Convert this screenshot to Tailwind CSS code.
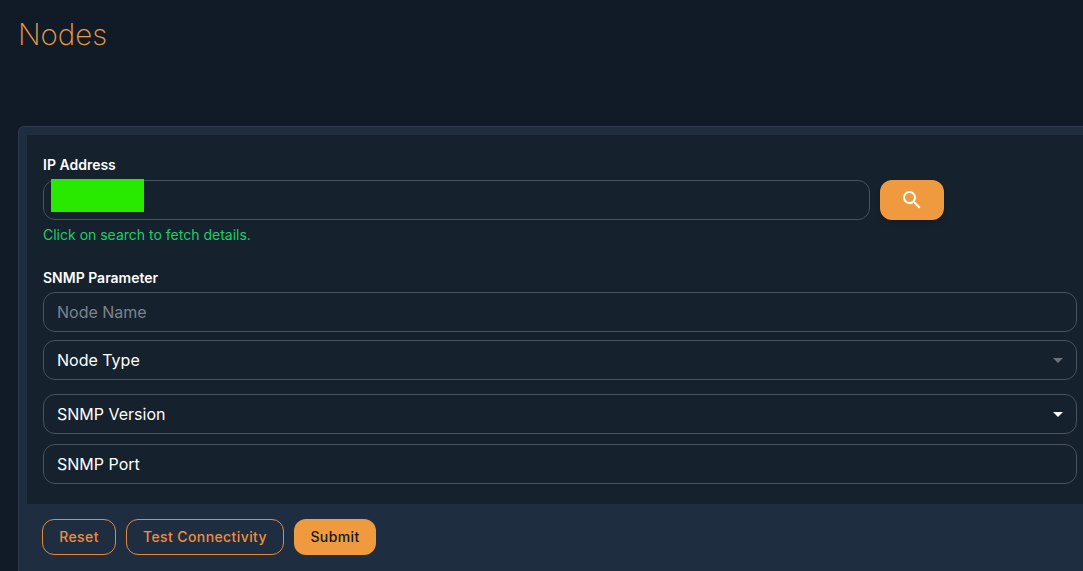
<!DOCTYPE html>
<html lang="en">
<head>
    <meta charset="UTF-8">
    <title>Nodes</title>
    <script src="https://cdn.jsdelivr.net/npm/@tailwindcss/browser@4"></script>
</head>
<body class="h-[571px] w-[1083px] overflow-hidden bg-[#111b27] font-['Inter',sans-serif] text-white">
    <div class="pl-[18px]">
        <!-- Page title -->
        <h1 class="h-[126px] pt-[15px] text-[29.5px] leading-[38px] font-extralight text-[#e89c48]">Nodes</h1>

        <!-- Card -->
        <div class="w-[1120px] rounded-tl-md border-t border-l border-[#2f3b4c] bg-[#1f2d41] pt-2 pl-2">
            <form class="h-[369px] w-[1066px] bg-[#15212c] pt-[21px] pl-4">
                <label class="block h-[24px] text-sm leading-[18px] font-semibold">IP Address</label>
                <div class="flex gap-[10px]">
                    <div class="relative h-10 w-[827px] rounded-xl border border-[#4a535f]">
                        <div class="absolute top-[-2px] left-[7px] h-[33px] w-[93px] bg-[#28e900]"></div>
                    </div>
                    <button type="button" class="flex h-10 w-16 items-center justify-center rounded-xl bg-[#f09a40] shadow-md">
                        <svg class="h-6 w-6" viewBox="0 0 24 24" fill="white">
                            <path d="M15.5 14h-.79l-.28-.27A6.471 6.471 0 0 0 16 9.5 6.5 6.5 0 1 0 9.5 16c1.61 0 3.09-.59 4.23-1.57l.27.28v.79l5 4.99L20.49 19l-4.99-5zm-6 0C7.01 14 5 11.99 5 9.5S7.01 5 9.5 5 14 7.01 14 9.5 11.99 14 9.5 14z"/>
                        </svg>
                    </button>
                </div>
                <p class="mt-[6px] h-[43px] text-sm leading-[18px] text-[#1ccf68]">Click on search to fetch details.</p>

                <label class="block h-[23px] text-sm leading-[18px] font-semibold">SNMP Parameter</label>
                <div class="w-[1034px]">
                    <div class="flex h-10 items-center rounded-xl border border-[#4a535f] px-[13px] text-base text-[#7c848d]">Node Name</div>
                    <div class="mt-2 flex h-10 items-center justify-between rounded-xl border border-[#4a535f] px-[13px] text-base">
                        <span>Node Type</span>
                        <span class="h-0 w-0 border-x-[5px] border-t-[5px] border-x-transparent border-t-[#6b727a]"></span>
                    </div>
                    <div class="mt-[14px] flex h-10 items-center justify-between rounded-xl border border-[#4a535f] px-[13px] text-base">
                        <span>SNMP Version</span>
                        <span class="h-0 w-0 border-x-[5px] border-t-[5px] border-x-transparent border-t-white"></span>
                    </div>
                    <div class="mt-[10px] flex h-10 items-center rounded-xl border border-[#4a535f] px-[13px] text-base">SNMP Port</div>
                </div>
            </form>

            <!-- Footer buttons -->
            <div class="flex h-[67px] gap-[10px] pt-[15px] pl-[15px]">
                <button class="h-9 w-[74px] rounded-xl border border-[#e58a3c] text-sm font-medium tracking-[0.4px] text-[#ee8f3e]">Reset</button>
                <button class="h-9 w-[158px] rounded-xl border border-[#e58a3c] text-sm font-medium tracking-[0.4px] text-[#ee8f3e]">Test Connectivity</button>
                <button class="h-9 w-[82px] rounded-xl bg-[#f09a40] text-sm font-medium tracking-[0.4px] text-[#10161d]">Submit</button>
            </div>
        </div>
    </div>
</body>
</html>
